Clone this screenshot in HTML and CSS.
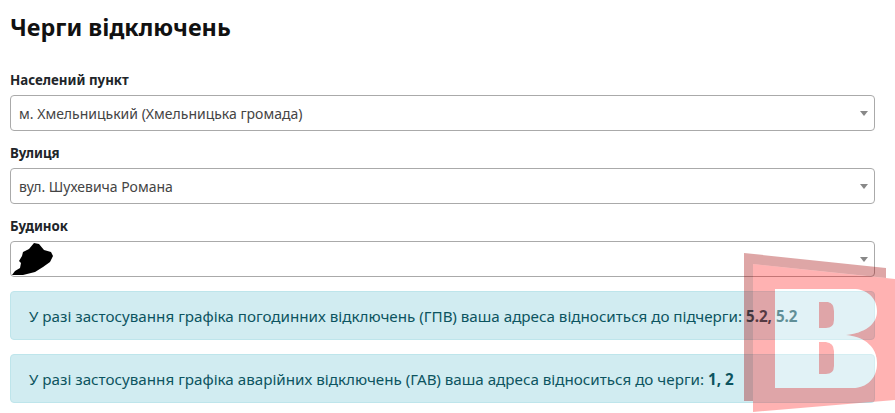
FILE: index.html
```html
<!DOCTYPE html>
<html lang="uk">
<head>
    <meta charset="UTF-8">
    <meta name="viewport" content="width=device-width, initial-scale=1.0">
    <title>Черги відключень</title>
    <link rel="stylesheet" href="styles.css">
</head>
<body>

<main class="page">
    <h1 class="page-title">Черги відключень</h1>

    <div class="field">
        <label class="field-label">Населений пункт</label>
        <div class="select-box">
            <span class="select-value">м. Хмельницький (Хмельницька громада)</span>
            <span class="select-arrow"></span>
        </div>
    </div>

    <div class="field">
        <label class="field-label">Вулиця</label>
        <div class="select-box">
            <span class="select-value">вул. Шухевича Романа</span>
            <span class="select-arrow"></span>
        </div>
    </div>

    <div class="field">
        <label class="field-label">Будинок</label>
        <div class="select-box select-box-end">
            <!-- замальоване значення -->
            <svg class="scribble" width="44" height="36" viewBox="0 0 44 36">
                <path d="M1 34 L4 30 L9 27 L10 22 L8 20 L11 15 L12 11 L18 8 L23 2 L28 3 L33 9 L40 11 L42 15 L39 21 L32 26 L24 31 L12 34 Z" fill="#000"/>
            </svg>
            <span class="select-arrow"></span>
        </div>
    </div>

    <div class="alert">У разі застосування графіка погодинних відключень (ГПВ) ваша адреса відноситься до підчерги: <b>5.2, 5.2</b></div>
    <div class="alert">У разі застосування графіка аварійних відключень (ГАВ) ваша адреса відноситься до черги: <b>1, 2</b></div>
</main>

<!-- водяний знак -->
<svg class="watermark" width="151" height="160" viewBox="0 0 151 160">
    <path d="M0 0 L142 15 L142 25 L9 11 L9 148 L0 148 Z" fill="#a00000" fill-opacity="0.35"/>
    <path fill-rule="evenodd" d="M9 11 L151 26 L151 147 L9 159 Z M31 36 L31 135 L109 135 C122 135 133 126 133 110 C133 95 122 84 102 82 C120 80 133 72 133 58 C133 44 122 36 109 36 Z M75 49 L84 49 Q90 50 90 58 L90 67 Q90 75 82 75 L75 75 Z M75 89 L82 89 Q90 90 90 98 L90 113 Q90 121 82 121 L75 121 Z" fill="#ff0000" fill-opacity="0.3"/>
    <path fill-rule="evenodd" d="M31 36 L31 135 L109 135 C122 135 133 126 133 110 C133 95 122 84 102 82 C120 80 133 72 133 58 C133 44 122 36 109 36 Z M75 49 L84 49 Q90 50 90 58 L90 67 Q90 75 82 75 L75 75 Z M75 89 L82 89 Q90 90 90 98 L90 113 Q90 121 82 121 L75 121 Z" fill="#fff" fill-opacity="0.35"/>
</svg>

</body>
</html>
```

FILE: styles.css
```css
body {
    font-family: "Noto Sans", sans-serif;
    background-color: #fff;
    color: #212529;
    margin: 0;
    padding: 0;
    height: 413px;
    overflow: hidden;
    position: relative;
}
.page {
    padding: 11px 20px 0 10px;
}
.page-title {
    font-size: 23.4px;
    line-height: 33px;
    font-weight: 700;
    color: #111;
    margin: 0 0 27px;
}
.field {
    margin-bottom: 13px;
}
.field-label {
    display: block;
    font-size: 13.3px;
    line-height: 18px;
    font-weight: 700;
    margin-bottom: 6px;
}
.select-box {
    display: flex;
    align-items: center;
    justify-content: space-between;
    height: 36px;
    box-sizing: border-box;
    padding: 0 6px 0 8px;
    border: 1px solid #aaa;
    border-radius: 4px;
    background-color: #fff;
    font-size: 14px;
    color: #444;
    position: relative;
}
.select-box-end {
    justify-content: flex-end;
}
.select-arrow {
    width: 0;
    height: 0;
    border-left: 4px solid transparent;
    border-right: 4px solid transparent;
    border-top: 5px solid #888;
}
.scribble {
    position: absolute;
    left: 0;
    top: -1px;
    filter: blur(0.7px);
}
.alert {
    height: 49px;
    box-sizing: border-box;
    padding: 0 18px;
    display: flex;
    align-items: center;
    gap: 4px;
    margin-top: 14px;
    background-color: #d1ecf1;
    border: 1px solid #bee5eb;
    border-radius: 4px;
    font-size: 15.2px;
    color: #0c5460;
}
.watermark {
    position: absolute;
    left: 744px;
    top: 253px;
}
```
